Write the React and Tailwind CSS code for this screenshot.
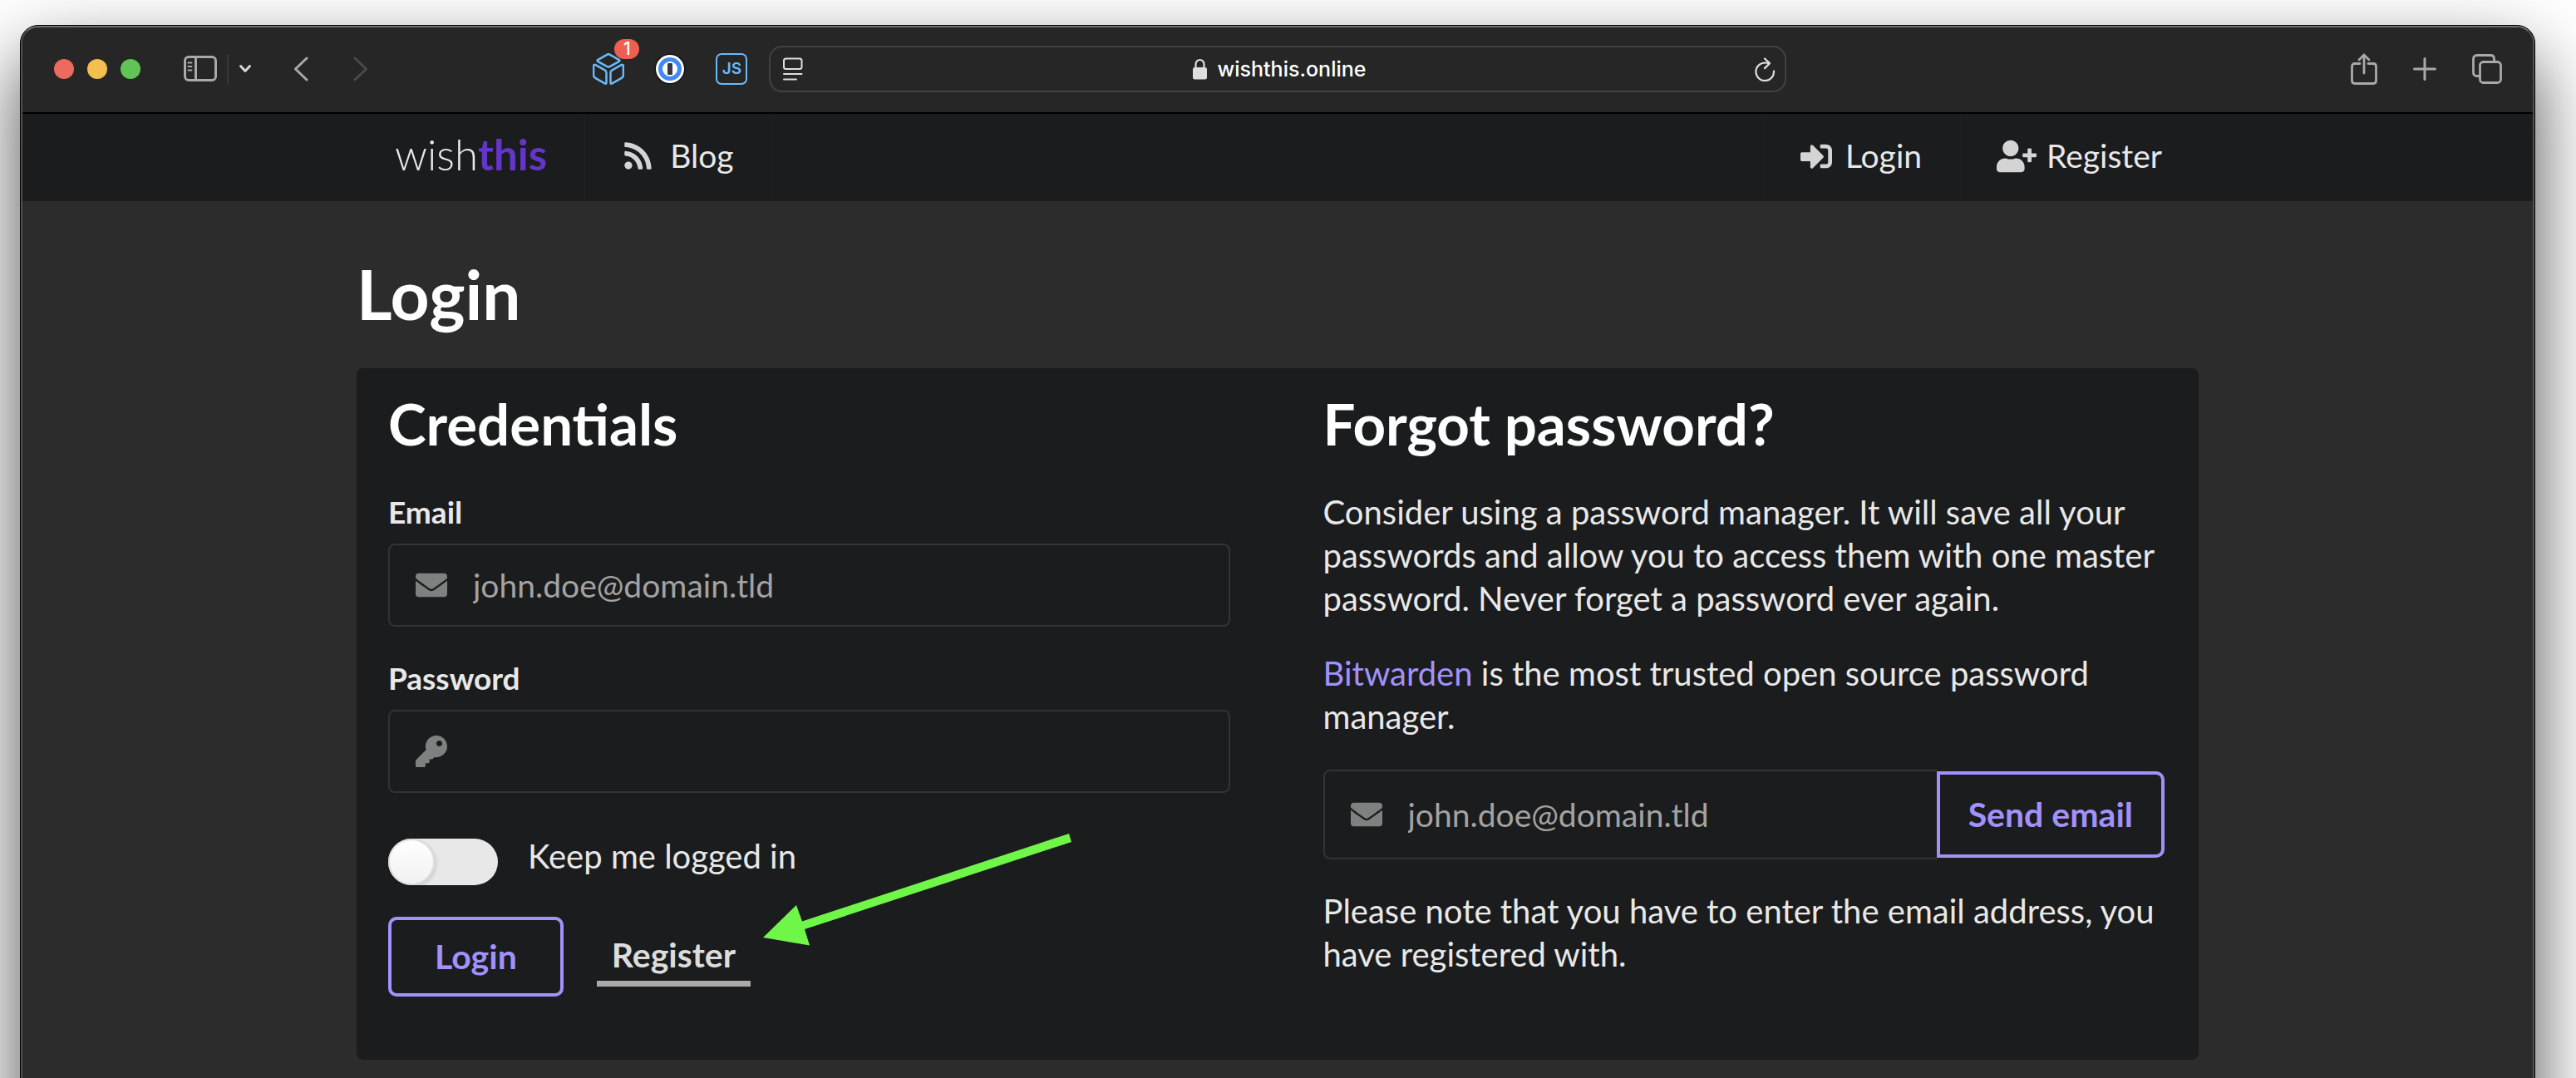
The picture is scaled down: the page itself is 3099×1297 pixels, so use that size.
import { FaRss, FaSignInAlt, FaUserPlus, FaEnvelope, FaKey } from "react-icons/fa";

function Toolbar() {
  return (
    <header className="grid h-[104px] grid-cols-[1fr_40.5%_1fr] items-center border-b-2 border-black bg-[#262626] pb-0.5">
      <div className="flex items-center pl-[38px] text-[#a9a9a9]">
        <div className="flex gap-4">
          <button aria-label="Close" className="size-6 rounded-full bg-[#ed6a5f]" />
          <button aria-label="Minimize" className="size-6 rounded-full bg-[#f5bf4f]" />
          <button aria-label="Zoom" className="size-6 rounded-full bg-[#61c555]" />
        </div>
        <button aria-label="Sidebar" className="ml-[52px]">
          <svg width="40" height="32" viewBox="0 0 40 32" fill="none" stroke="currentColor" strokeWidth="3">
            <rect x="1.5" y="1.5" width="37" height="28" rx="4.5" />
            <path d="M14.5 2v27" />
            <path d="M5.5 8.500h4M5.5 13h4M5.500 17.500h4" strokeLinecap="round" strokeWidth="2" />
          </svg>
        </button>
        <span className="ml-3 h-9 w-0.5 bg-[#383838]" />
        <button aria-label="Tab groups" className="ml-3 text-[#d4d4d4]">
          <svg width="16" height="12" viewBox="0 0 16 12" fill="none" stroke="currentColor" strokeWidth="3" strokeLinecap="round" strokeLinejoin="round">
            <path d="M2.500 2.500 8 8.500l5.500-6" />
          </svg>
        </button>
        <button aria-label="Back" className="ml-[50px]">
          <svg width="18" height="30" viewBox="0 0 18 30" fill="none" stroke="currentColor" strokeWidth="3" strokeLinecap="round" strokeLinejoin="round">
            <path d="M16 2 2.500 15 16 28" />
          </svg>
        </button>
        <button aria-label="Forward" className="ml-[54px] text-[#4a4a4a]">
          <svg width="18" height="30" viewBox="0 0 18 30" fill="none" stroke="currentColor" strokeWidth="3" strokeLinecap="round" strokeLinejoin="round">
            <path d="M2 2l13.500 13L2 28" />
          </svg>
        </button>
        <div className="mr-[26px] ml-auto flex items-center gap-9">
          <button aria-label="Packages" className="relative text-[#6db9f8]">
            <svg width="38" height="38" viewBox="0 0 38 38" fill="none" stroke="currentColor" strokeWidth="2.500" strokeLinejoin="round">
              <path d="M17.500 1.600q1.500-.8 3 0l11 6.200q2 1.200 0 2.400l-11 6q-1.500.8-3 0l-11-6q-2-1.200 0-2.400z" />
              <path d="M3.600 14.200l11 6.200q1.900 1.100 1.900 3.200v11.600q0 2.200-1.900 1.200l-11.400-6.600q-2.100-1.200-2.100-3.400V15.600q0-2.500 2.500-1.400z" />
              <path d="M34.400 14.200l-11 6.200q-1.900 1.100-1.900 3.200v11.600q0 2.200 1.900 1.200l11.400-6.600q2.100-1.200 2.100-3.400V15.600q0-2.500-2.500-1.400z" />
            </svg>
            <span className="absolute -top-[17px] left-[26px] flex h-6 w-[30px] items-center justify-center rounded-full bg-[#ec5f51] font-[Inter] text-[21px] font-medium text-white">1</span>
          </button>
          <button aria-label="Password manager">
            <svg width="38" height="38" viewBox="0 0 38 38">
              <circle cx="19" cy="19" r="18.500" fill="#111" />
              <circle cx="19" cy="19" r="17" fill="#fff" />
              <circle cx="19" cy="19" r="11.500" fill="none" stroke="#4189f7" strokeWidth="5" />
              <rect x="16" y="12" width="6" height="14" rx="1" fill="#3a3a3a" />
            </svg>
          </button>
          <button aria-label="JavaScript" className="flex size-[38px] items-center justify-center rounded-[7px] border-2 border-[#6db9f8] font-[Inter] text-[19px] font-semibold text-[#6db9f8]">JS</button>
        </div>
      </div>

      <div className="flex h-14 items-center justify-between rounded-2xl border-2 border-[#424242] px-[15px] text-[#dedede]">
        <button aria-label="Reader">
          <svg width="24" height="28" viewBox="0 0 24 28" fill="none" stroke="currentColor" strokeWidth="2" strokeLinecap="round">
            <rect x="1" y="1.500" width="21.500" height="12.500" rx="2.500" />
            <path d="M1 20h21.500M1 26.500h15" />
          </svg>
        </button>
        <div className="flex items-center gap-3">
          <svg width="19" height="26" viewBox="0 0 19 26">
            <path d="M4.500 12V7.500a5 5.500 0 0 1 10 0V12" fill="none" stroke="currentColor" strokeWidth="2.200" />
            <rect x="1" y="11" width="17" height="14.500" rx="2.500" fill="currentColor" />
          </svg>
          <span className="font-[Inter] text-[25px] leading-8 font-medium text-white">wishthis.online</span>
        </div>
        <button aria-label="Reload" className="-mr-1">
          <svg width="25" height="29" viewBox="0 0 25 29" fill="none" stroke="currentColor" strokeWidth="2.200" strokeLinecap="round" strokeLinejoin="round">
            <path d="M23 16.500A10.800 10.800 0 1 1 12.200 6.500q3 0 5.500.6M12 1.500l6 5.600-6 6" />
          </svg>
        </button>
      </div>

      <div className="flex items-center justify-end gap-[43px] pr-[37px] text-[#a9a9a9]">
        <button aria-label="Share">
          <svg width="32" height="38" viewBox="0 0 32 38" fill="none" stroke="currentColor" strokeWidth="2.800" strokeLinecap="round" strokeLinejoin="round">
            <path d="M11 12.500H5q-3.500 0-3.500 3.500v17q0 3.500 3.500 3.500h22q3.500 0 3.500-3.500V16q0-3.500-3.500-3.500h-6M16 24V2M10 8l6-6 6 6" />
          </svg>
        </button>
        <button aria-label="New tab">
          <svg width="28" height="28" viewBox="0 0 28 28" fill="none" stroke="currentColor" strokeWidth="3" strokeLinecap="round">
            <path d="M14 1.500v25M1.500 14h25" />
          </svg>
        </button>
        <button aria-label="Tab overview">
          <svg width="36" height="36" viewBox="0 0 36 36" fill="none" stroke="currentColor" strokeWidth="2.800">
            <rect x="9.500" y="9.500" width="25" height="25" rx="4" />
            <path d="M9.500 26.500H6q-4.500 0-4.500-4.500V6q0-4.500 4.500-4.500h16q4.500 0 4.500 4.500v3.500" />
          </svg>
        </button>
      </div>
    </header>
  );
}

function Nav() {
  return (
    <nav className="bg-[#1b1c1d]">
      <div className="mx-auto flex h-[105px] w-full max-w-[2216px] items-stretch text-[39px] text-[#e8e8e8]">
        <a href="#home" className="flex items-center border-r-2 border-white/1 pr-11 pb-1.5 pl-[46px] text-[51px]">
          <span className="font-light">wish</span>
          <span className="font-bold text-[#6435c9]">this</span>
        </a>
        <a href="#blog" className="flex items-center border-r-2 border-white/1 px-[45px] pb-1">
          <FaRss className="mr-5 size-[37px] text-[#d4d4d4]" />
          Blog
        </a>
        <div className="ml-auto flex">
          <a href="#login" className="flex items-center border-x-2 border-white/1 pr-[46px] pl-11 pb-1">
            <FaSignInAlt className="mr-4 size-[38px] text-[#d4d4d4]" />
            Login
          </a>
          <a href="#register" className="flex items-center pr-11 pb-1 pl-[42px]">
            <FaUserPlus className="mr-3 size-12 text-[#d4d4d4]" />
            Register
          </a>
        </div>
      </div>
    </nav>
  );
}

const field = "flex items-center gap-[31px] border-2 border-[#323334] pl-[31px]";
const input = "h-full min-w-0 flex-1 bg-transparent text-[39px] text-[#e8e8e8] outline-none placeholder:text-[#a3a3a3]";
const outlined = "border-4 border-[#a291fb] text-[41px] font-bold text-[#a291fb]";

function Credentials() {
  return (
    <form>
      <h2 className="text-[69px] leading-[84px] font-bold text-white">Credentials</h2>
      <label htmlFor="email" className="mt-[42px] block text-[37px] leading-[44px] font-bold">Email</label>
      <div className={field + " mt-4 h-[100px] rounded-lg"}>
        <FaEnvelope className="size-[38px] text-[#7f8080]" />
        <input id="email" type="email" placeholder="john.doe@domain.tld" className={input} />
      </div>
      <label htmlFor="password" className="mt-10 block text-[37px] leading-[44px] font-bold">Password</label>
      <div className={field + " mt-4 h-[100px] rounded-lg"}>
        <FaKey className="size-[38px] text-[#7f8080]" />
        <input id="password" type="password" className={input} />
      </div>
      <label className="mt-[50px] flex h-[61px] items-start gap-9">
        <input type="checkbox" className="peer sr-only" />
        <span className="mt-[5px] flex h-14 w-[132px] rounded-full bg-[#e8e8e8] peer-checked:justify-end">
          <span className="size-14 rounded-full border-2 border-[#dcdcdc] bg-linear-to-b from-white to-[#f1f1f1] shadow-[2px_2px_4px_rgba(0,0,0,0.12)]" />
        </span>
        <span className="text-[40px] leading-[52px]">Keep me logged in</span>
      </label>
      <div className="relative mt-[38px] flex gap-10">
        <button type="button" className={outlined + " h-24 rounded-[10px] px-[52px]"}>Login</button>
        <a href="#register" className="mt-[77px] mb-3 flex h-[7px] items-end bg-[#a9a9a9] px-[18px] text-[41px] font-bold text-[#dcdcdc]">
          <span className="mb-2">Register</span>
        </a>
        <svg className="absolute -top-[100px] left-[451px]" width="371" height="135" viewBox="0 0 371 135" fill="#70f648" aria-hidden="true">
          <path d="M0 125 40 86l7 19.500L368 0l3 10L50 115l6 19.500z" />
        </svg>
      </div>
    </form>
  );
}

function ForgotPassword() {
  return (
    <form>
      <h2 className="text-[69px] leading-[84px] font-bold text-white">Forgot password?</h2>
      <div className="mt-[38px] space-y-[38px] text-[40px] leading-[52px]">
        <p>Consider using a password manager. It will save all your passwords and allow you to access them with one master password. Never forget a password ever again.</p>
        <p><a href="#bitwarden" className="text-[#a291fb]">Bitwarden</a> is the most trusted open source password manager.</p>
      </div>
      <div className="mt-[38px] flex items-center">
        <div className={field + " h-[108px] flex-1 rounded-l-lg border-r-0"}>
          <FaEnvelope className="size-[38px] text-[#7f8080]" />
          <input type="email" aria-label="Email for password reset" placeholder="john.doe@domain.tld" className={input} />
        </div>
        <button type="button" className={outlined + " h-[104px] rounded-r-[10px] px-[34px]"}>Send email</button>
      </div>
      <p className="mt-9 text-[40px] leading-[52px]">Please note that you have to enter the email address, you have registered with.</p>
    </form>
  );
}

export default function App() {
  return (
    <div className="flex min-h-screen flex-col overflow-hidden bg-white pt-[30px] font-[Lato,sans-serif]">
      <div className="-mb-24 ml-6 mr-[49px] flex flex-1 flex-col rounded-t-[22px] border border-black bg-black shadow-[0_40px_90px_rgba(0,0,0,0.7)]">
        <div className="flex flex-1 flex-col overflow-hidden rounded-t-[21px] border-x-2 border-t-2 border-x-[#505050] border-t-[#707070] bg-[#2c2c2c] text-[#e8e8e8]">
          <Toolbar />
          <Nav />
          <main className="mx-auto w-full max-w-[2216px] pt-[63px] pb-[117px]">
            <h1 className="text-[82px] leading-[96px] font-bold text-white">Login</h1>
            <section className="mt-[42px] grid grid-cols-2 gap-28 rounded-lg bg-[#1b1c1d] pr-[41px] pl-[38px] pt-[25px] pb-[76px]">
              <Credentials />
              <ForgotPassword />
            </section>
          </main>
        </div>
      </div>
    </div>
  );
}
